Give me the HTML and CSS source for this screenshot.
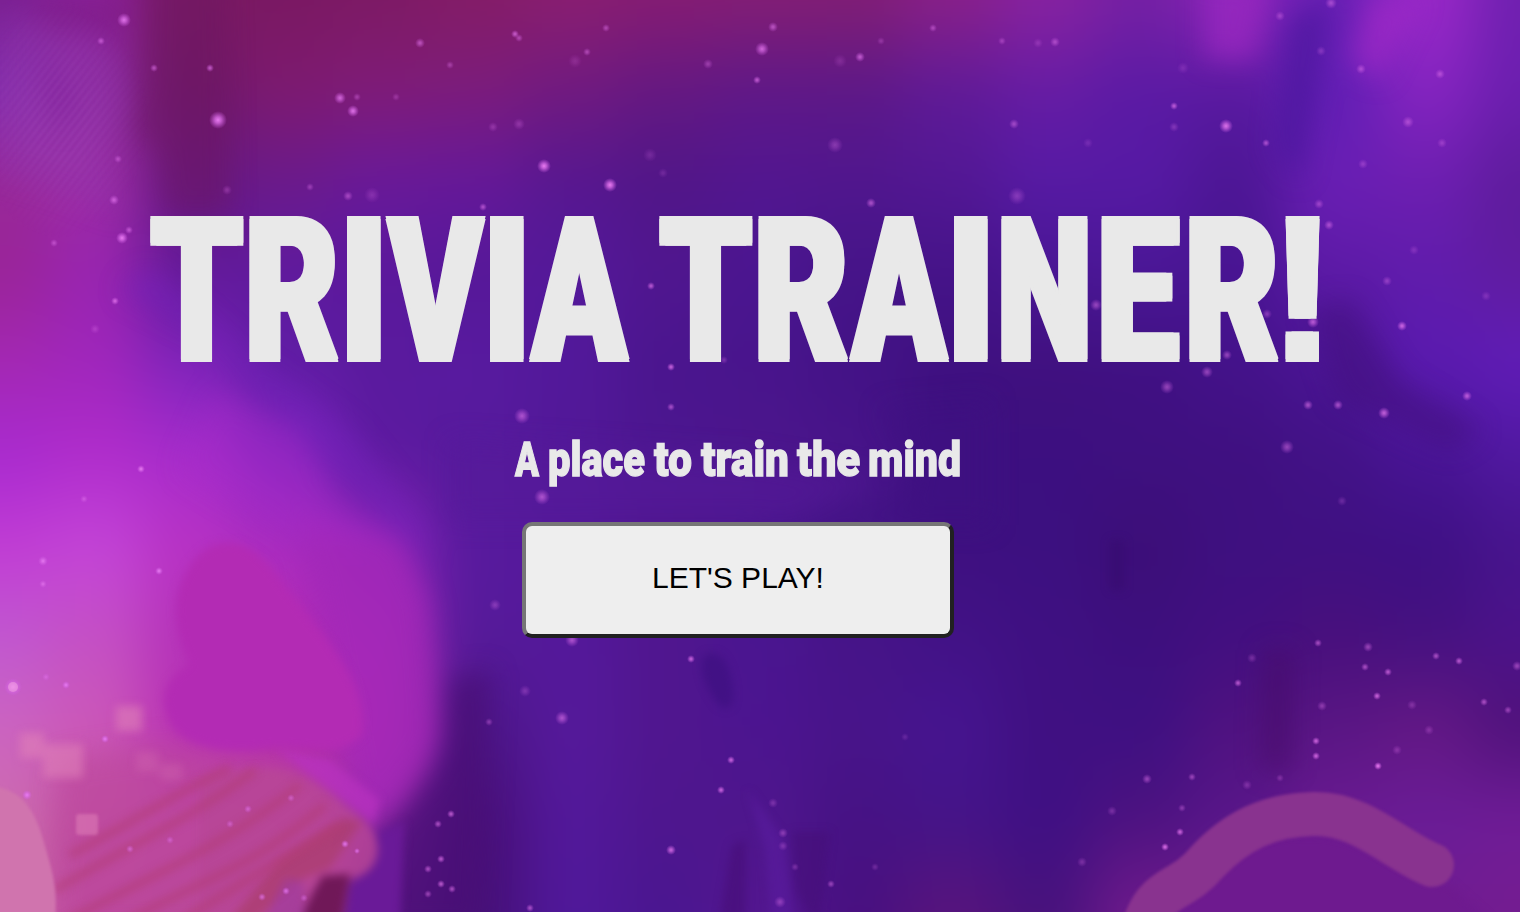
FILE: index.html
```html
<!DOCTYPE html>
<html lang="en">
<head>
<meta charset="utf-8">
<title>Trivia Trainer</title>
<link rel="stylesheet" href="styles.css">
</head>
<body>
<div class="backdrop">
<div class="sky" id="sky"></div>
<svg class="nebula" viewBox="0 0 1520 912" aria-hidden="true">
  <defs>
    <filter id="b1" filterUnits="userSpaceOnUse" x="-60" y="-60" width="1640" height="1032"><feGaussianBlur stdDeviation="1.6"/></filter>
    <filter id="b4" filterUnits="userSpaceOnUse" x="-60" y="-60" width="1640" height="1032"><feGaussianBlur stdDeviation="4"/></filter>
    <filter id="b12" filterUnits="userSpaceOnUse" x="-60" y="-60" width="1640" height="1032"><feGaussianBlur stdDeviation="13"/></filter>
    <pattern id="hatch" width="6" height="6" patternUnits="userSpaceOnUse" patternTransform="rotate(38)"><rect width="2" height="6" fill="#c070d8"/></pattern>
    <radialGradient id="hatchFade"><stop offset=".3" stop-color="#fff"/><stop offset="1" stop-color="#fff" stop-opacity="0"/></radialGradient>
    <mask id="hatchMask"><ellipse cx="60" cy="120" rx="90" ry="120" fill="url(#hatchFade)"/></mask>
    <radialGradient id="star"><stop offset="0" stop-color="#e87cf0"/><stop offset=".35" stop-color="#e070ec" stop-opacity=".75"/><stop offset="1" stop-color="#d060e4" stop-opacity="0"/></radialGradient>
  </defs>
  <g filter="url(#b12)">
    <path d="M150 -40H225L230 215H165L158 150L132 130L145 85Z" fill="#6c1662" opacity=".45"/>
    <path d="M0 20L60 10L120 60L128 110L105 150L125 215L60 190L0 170Z" fill="#9034ac" opacity=".35"/>
    <path d="M40 60L80 90L65 130L45 110Z" fill="#80209a" opacity=".6"/>
    <path d="M30 0H130L120 30L50 34Z" fill="#7c1a84" opacity=".5"/>
    <path d="M1205 -20H1270L1255 60L1205 58Z" fill="#9a28c0" opacity=".75"/>
    <path d="M1290 20L1330 0L1318 80L1300 180L1275 150Z" fill="#4c179e" opacity=".7"/>
    <path d="M120 290L200 330L290 420L330 470L430 560L420 520L350 430L250 360L150 270Z" fill="#7422bc" opacity=".5"/>
    <path d="M1370 0L1420 0L1380 80L1350 60Z" fill="#a42ac8" opacity=".6"/>
    <path d="M300 520L400 540L428 600L440 740L385 820L355 800Z" fill="#a428b8" opacity=".75"/>
    <path d="M215 390L300 430L330 490L400 545L300 540L180 470Z" fill="#a82ac8" opacity=".35"/>
    <path d="M450 680L490 670L480 930H375L385 830L440 770Z" fill="#480f76" opacity=".75"/>
    <path d="M1310 310L1350 300L1400 380L1480 430L1450 450L1340 400Z" fill="#41107c" opacity=".5"/>
    <path d="M1265 650L1292 650L1290 770H1262Z" fill="#460c68" opacity=".6"/>
    <path d="M880 410C900 430 925 480 905 495C880 515 800 515 750 525H990V400Z" fill="#3e1082" opacity=".5"/>
    <path d="M450 440L760 460L880 480L790 520H450Z" fill="#56199a" opacity=".5"/>
    <path d="M60 760L160 745L290 765L345 810L340 870L270 930H50Z" fill="#bc489c" opacity=".6"/>
  </g>
  <g filter="url(#b4)">
    <path d="M705 655C722 648 730 665 733 690C735 715 720 712 712 695C705 685 697 664 705 655Z" fill="#3d0f80" opacity=".7"/>
    <path d="M732 845L746 840L745 930H718Z" fill="#460e76" opacity=".6"/>
    <path d="M792 832L830 832L818 930L796 890Z" fill="#440d76" opacity=".5"/>
    <path d="M748 790L784 840L795 930H772L765 850Z" fill="#5a1ca0" opacity=".6"/>
    <rect x="1110" y="540" width="14" height="50" fill="#36096c" opacity=".5"/>
    <path d="M378 832L404 822L400 930H345L350 885L372 870Z" fill="#6a1a98"/>
    <path d="M200 780C270 755 310 775 345 806C392 832 384 872 352 878L312 886L290 930H200Z" fill="#b84696" opacity=".8"/>
    <path d="M344 818L362 822L330 868L300 880L250 925H225L280 860Z" fill="#a83c64" opacity=".6"/>
    <path d="M322 876L350 874L340 925H298Z" fill="#701858"/>
    <path d="M275 748L374 824L380 800L330 760Z" fill="#b832c0" opacity=".75"/>
    <path d="M262 925L285 878L304 882L305 925Z" fill="#a03c9c" opacity=".7"/>
  </g>
  <g class="dunes" filter="url(#b4)">
    <path d="M55 890C120 850 190 820 255 770"/>
    <path d="M60 925C140 880 220 850 300 785"/>
    <path d="M120 925C190 885 250 870 325 805"/>
    <path d="M175 925C230 890 280 860 340 825"/>
    <path d="M70 855C120 830 180 790 230 768"/>
  </g>
  <rect width="160" height="240" fill="url(#hatch)" mask="url(#hatchMask)" opacity=".25" filter="url(#b1)"/>
  <path d="M228 543C260 543 275 575 300 605C335 650 370 690 362 735C340 760 300 745 270 748C235 754 195 750 175 730C158 705 160 682 190 664C175 635 170 600 185 575C195 555 208 543 228 543Z" fill="#b32bb4" filter="url(#b4)"/>
  <path d="M-15 786C25 786 37 815 46 850C55 880 58 895 54 930H-15Z" fill="#d074ae" filter="url(#b1)"/>
  <g fill="#e080b8" opacity=".6" filter="url(#b4)"><rect x="20" y="733" width="24" height="25"/><rect x="43" y="744" width="40" height="34"/><rect x="116" y="706" width="26" height="25"/><rect x="136" y="752" width="22" height="20" opacity=".4"/><rect x="160" y="764" width="22" height="16" opacity=".4"/></g>
  <rect x="76" y="814" width="22" height="21" rx="3" fill="#e080b8" opacity=".55" filter="url(#b1)"/>
  <path d="M1160 930C1190 885 1215 835 1310 835C1370 835 1400 880 1450 885L1500 930Z" fill="#6e1a8f" filter="url(#b4)"/>
  <path d="M1146 920C1160 885 1182 892 1207 862C1237 830 1270 815 1313 814C1360 812 1395 850 1432 865" fill="none" stroke="#89338f" stroke-width="44" stroke-linecap="round" stroke-linejoin="round" filter="url(#b1)"/>
  <g id="stars" fill="url(#star)"></g>
</svg>
</div>
<main class="home">
  <h1 class="title"><svg class="title-art" viewBox="0 0 1180 150" aria-label="TRIVIA TRAINER!">
    <defs><filter id="heavy" filterUnits="userSpaceOnUse" x="-10" y="-10" width="1200" height="170">
      <feOffset in="SourceGraphic" dx="-3" dy="-1.5" result="a"/><feOffset in="SourceGraphic" dx="3" dy="-1.5" result="b"/>
      <feOffset in="SourceGraphic" dx="-3" dy="1.5" result="c"/><feOffset in="SourceGraphic" dx="3" dy="1.5" result="d"/>
      <feMerge><feMergeNode in="a"/><feMergeNode in="b"/><feMergeNode in="c"/><feMergeNode in="d"/><feMergeNode in="SourceGraphic"/></feMerge>
    </filter></defs>
    <text class="title-text" y="146.5" id="title" filter="url(#heavy)"></text>
  </svg></h1>
  <h2 class="tagline"><svg class="tagline-art" viewBox="0 0 450 50">
    <text class="tagline-text" y="37.6"><tspan x="2" textLength="24" lengthAdjust="spacingAndGlyphs">A</tspan><tspan x="35" textLength="97" lengthAdjust="spacingAndGlyphs">place</tspan><tspan x="141" textLength="38" lengthAdjust="spacingAndGlyphs">to</tspan><tspan x="188" textLength="88" lengthAdjust="spacingAndGlyphs">train</tspan><tspan x="284" textLength="63" lengthAdjust="spacingAndGlyphs">the</tspan><tspan x="355" textLength="93" lengthAdjust="spacingAndGlyphs">mind</tspan></text>
  </svg></h2>
  <button class="play" type="button">LET'S PLAY!</button>
</main>
<script src="script.js"></script>
</body>
</html>
```
FILE: styles.css
```css
body {
  margin: 0;
  height: 912px;
  overflow: hidden;
  position: relative;
  background: #4c168e;
}
.backdrop {
  position: absolute;
  inset: 0;
  overflow: hidden;
}
.sky {
  position: absolute;
  top: -91px;
  left: -142.5px;
  width: 1805px;
  height: 1094px;
  display: flex;
  filter: blur(28px);
}
.sky-band { flex: 0 0 95px; }
.nebula {
  position: absolute;
  inset: 0;
  width: 1520px;
  height: 912px;
}
.dunes {
  fill: none;
  stroke: #b23c70;
  stroke-width: 8;
  opacity: .55;
}
filter { color-interpolation-filters: sRGB; }
.home {
  position: relative;
  display: flex;
  flex-direction: column;
  align-items: center;
  width: 1476px;
  padding-top: 213px;
}
.title, .tagline { margin: 0; font-size: 0; }
.title-art { width: 1180px; height: 150px; overflow: visible; }
.title-text {
  font: 900 201px Roboto, sans-serif;
  text-rendering: geometricPrecision;
  fill: #e9e9e9;
}
.title-mark { font: bold 208px "Liberation Sans", Arial, sans-serif; }
.tagline { margin-top: 75px; }
.tagline-art { width: 450px; height: 50px; overflow: visible; }
.tagline-text {
  font: 900 49px Roboto, sans-serif;
  fill: #e9e9e9;
  stroke: #e9e9e9;
  stroke-width: 1.3;
}
.play {
  box-sizing: border-box;
  width: 432px;
  height: 116px;
  margin-top: 34px;
  padding: 0 0 4px;
  border: 4px solid;
  border-color: #767676 #212121 #212121 #767676;
  border-radius: 10px;
  background: #eee;
  color: #000;
  font: 30px "Liberation Sans", Arial, sans-serif;
}
```
FILE: script.js
```js
// Vertical colour bands, top to bottom; neighbours melt together through the blur on .sky.
const bands = [
  "7a1f90 8430b0 982898 9a2498 a428b4 a82ad0 c23cd4 c058d0 cc64c0 cc6cae d070ae",
  "8a2098 8a2a9c 9c2ca4 9824b0 a026bc b02ccc c444d8 c450c4 cc58b8 c050a0 bc489c",
  "7a1a62 6e1868 661880 60199a 8024bc a82ccc b832c4 b432b8 b830b4 bc48a0 b84a98",
  "7a1862 7e1a70 6a1a8c 5f1a9e 5e1ca4 8424c0 ac2cc0 b42cb4 b42ab0 b84498 a43c80",
  "7d1a64 801c78 68199a 5a189c 5a1a9e 5c1aa0 8c24b8 a42ab8 b02cb4 9028a8 681a88",
  "841c66 7c1c7c 64189a 561898 581aa0 561a9c 581a9e 561a9a 4c1688 480f78 461078",
  "8a1e70 701a80 561790 54189a 52189a 521898 54189a 54189a 55199a 52189a 50189a",
  "861c72 641882 501688 50168f 4a158e 4c1690 50168f 50168f 50168f 4e168e 4a1690",
  "841e74 5e1888 521690 4a1590 48148c 4c168c 4a1590 4a1590 4c1490 4e168c 541690",
  "821e74 5c1888 50168e 451488 431286 48148a 461488 461488 48148a 461284 481080",
  "8a2088 5e1a98 521794 451388 3e1080 3e1080 3e1080 421286 461490 441488 58147c",
  "8822a0 651ca4 561aa4 491694 40107e 3c0f80 3c1080 3f1082 401082 3f1084 48127c",
  "7620a4 5a1aa4 5619a4 4a1796 401082 3e1080 3c0e78 3d0f7e 3e1082 4c1280 701a8c",
  "8a24b8 5819a0 4c1694 481492 44128a 3f1080 3e1080 420f80 501280 58168a 701c90",
  "681fb4 601eb4 6a1eb4 5c1aa6 4a1494 421286 3f1082 480f7c 5a1684 6a1a92 741c8c",
  "9a28c8 8424c0 6c1eb0 601cac 5a1ab0 481494 3e1084 451180 641884 6a1c98 701c90",
  "7020b0 6c1eb0 5e1c9c 601ca0 601cb8 5018a0 46148c 4c128a 50127a 701c98 741c90"
];
const sky = document.getElementById("sky");
[bands[0], ...bands, bands[bands.length - 1]].forEach(function (band) {
  const c = band.split(" ").map(v => "#" + v);
  const el = document.createElement("div");
  el.className = "sky-band";
  el.style.background = "linear-gradient(" + [c[0], ...c, c[c.length - 1]].join(",") + ")";
  sky.appendChild(el);
});

// x, y, radius, opacity
const stars = [
  [124,20,7,.9],[101,41,4,.6],[154,68,4,.6],[210,68,4,.7],[218,120,9,1],[340,98,6,.8],[353,111,6,.9],[357,97,4,.4],
  [420,43,5,.6],[450,65,4,.4],[396,97,4,.3],[493,127,5,.3],[114,200,5,.7],[122,238,6,1],[129,230,4,.6],[118,159,4,.5],
  [54,243,4,.5],[115,301,4,.8],[95,329,5,.3],[227,190,5,.3],[310,187,4,.4],[348,196,5,.5],[372,195,8,.25],[483,207,4,.6],
  [515,34,4,.7],[519,38,4,.5],[606,28,4,.5],[587,52,4,.5],[575,61,7,.2],[708,64,5,.4],[773,27,5,.6],[762,49,7,.8],
  [757,80,4,.7],[860,57,5,.7],[840,61,7,.2],[933,28,4,.5],[881,41,4,.3],[1002,41,4,.4],[835,145,8,.35],[544,166,7,1],
  [610,185,7,1],[519,124,6,.3],[650,155,7,.2],[663,173,5,.2],[871,203,5,.6],[651,286,4,.7],[671,367,4,.8],[671,407,4,.6],
  [724,360,4,.3],[522,416,8,.6],[542,497,8,.6],[1017,196,9,.35],[1014,124,5,.5],[1055,42,5,.5],[1038,43,5,.25],[1183,68,6,.2],
  [1174,106,4,.7],[1174,127,5,.3],[1226,126,7,.9],[1266,143,4,.6],[1088,143,5,.2],[1280,16,5,.4],[1331,3,6,.5],[1321,51,5,.3],
  [1361,69,5,.5],[1440,74,5,.5],[1408,122,6,.5],[1442,143,5,.35],[1363,164,5,.35],[1319,204,5,.45],[1329,225,5,.55],[1414,250,5,.25],
  [1387,281,5,.4],[1402,326,5,.8],[1313,322,6,.7],[1267,314,5,.4],[1096,305,6,.5],[1227,355,5,.5],[1207,372,6,.5],[1167,387,7,.5],
  [1308,405,5,.6],[1338,405,5,.6],[1384,413,6,.75],[1467,396,5,.7],[1287,447,7,.5],[1486,296,5,.25],[1342,501,5,.25],
  [141,469,4,1],[84,499,4,.5],[43,561,5,.9],[43,584,4,.7],[159,571,4,1],[66,685,4,1],[46,677,4,.5],
  [105,739,4,1],[27,795,5,1],[248,809,4,.6],[291,798,4,.5],[230,824,4,.5],[170,840,4,.5],[345,844,4,.9],[357,851,3,.8],
  [286,891,4,.8],[304,898,4,.5],[262,897,4,.7],[130,849,4,.6],[451,814,4,.7],[438,824,4,.6],[441,859,4,.7],[428,869,4,.6],
  [441,884,4,.7],[452,889,4,.6],[428,894,4,.5],[489,722,4,.4],[495,605,6,.35],
  [572,640,7,.6],[525,691,6,.3],[562,718,7,.6],[691,659,4,.8],[731,760,4,.8],[721,790,4,.8],[773,803,5,.3],[671,850,5,.8],
  [783,833,5,.4],[783,846,5,.3],[831,884,4,.5],[795,867,4,.3],[780,902,6,.4],[875,867,4,.25],[530,908,4,.6],[905,737,4,.2],
  [1318,643,4,.6],[1368,647,5,.5],[1365,667,4,.6],[1388,672,4,.7],[1252,658,5,.3],[1238,683,4,.7],[1377,696,4,.8],
  [1436,656,4,.6],[1459,661,4,.7],[1517,666,5,.5],[1484,702,4,.6],[1508,710,4,.5],[1412,705,5,.3],[1322,706,5,.4],
  [1316,741,4,.8],[1316,756,4,.8],[1378,766,4,1],[1397,750,5,.3],[1429,730,5,.3],[1247,785,5,.3],[1280,778,4,.3],
  [1147,779,5,.5],[1192,777,4,.5],[1182,808,4,.4],[1180,832,4,.8],[1165,847,4,.9],[1112,811,5,.3],[1082,862,5,.3]
];
const ns = "http://www.w3.org/2000/svg";
const starGroup = document.getElementById("stars");
function addStar(x, y, r, opacity, fill) {
  const c = document.createElementNS(ns, "circle");
  c.setAttribute("cx", x);
  c.setAttribute("cy", y);
  c.setAttribute("r", r);
  c.setAttribute("opacity", opacity);
  if (fill) c.setAttribute("fill", fill);
  starGroup.appendChild(c);
}
stars.forEach(s => addStar(...s));
addStar(13, 687, 9, 1);
addStar(13, 687, 5, .5, "#f4a8e0");

// Headline letters: character, left and right edge of its ink
const letters = [
  ["T",150,244],["R",249,339],["I",347,381],["V",385,486],["I",490,524],["A",528.5,630],[" "],
  ["T",659,753],["R",758,848.5],["A",848.5,949.5],["I",954,988],["N",1001,1088],["E",1101,1180],["R",1189,1279],["!",1285,1320]
];
const origin = 148, spread = 3;
const ctx = document.createElement("canvas").getContext("2d");
const title = document.getElementById("title");
letters.forEach(function ([ch, left, right]) {
  const span = document.createElementNS(ns, "tspan");
  span.textContent = ch;
  if (left !== undefined) {
    ctx.font = ch === "!" ? 'bold 208px "Liberation Sans"' : "900 201px Roboto";
    if (ch === "!") span.setAttribute("class", "title-mark");
    const m = ctx.measureText(ch);
    const k = (right - left - 2 * spread) / (m.actualBoundingBoxRight + m.actualBoundingBoxLeft);
    span.setAttribute("x", left + spread - origin + m.actualBoundingBoxLeft * k);
    span.setAttribute("textLength", m.width * k);
    span.setAttribute("lengthAdjust", "spacingAndGlyphs");
  }
  title.appendChild(span);
});
```
